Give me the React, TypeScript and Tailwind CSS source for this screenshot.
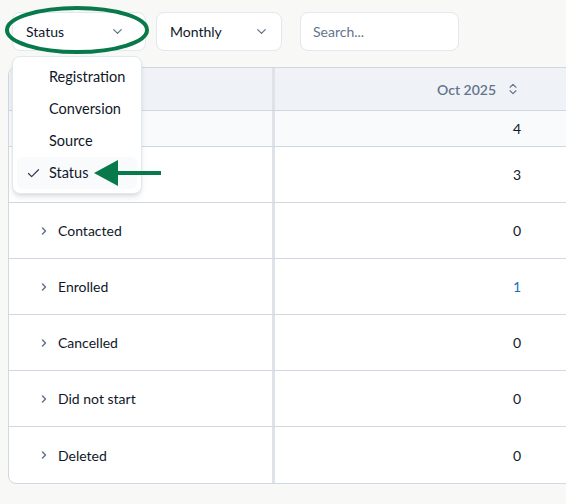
import { ChevronDown, ChevronRight, ChevronsUpDown, Check } from 'lucide-react'

const rows = [
  { label: '', value: '3' },
  { label: 'Contacted', value: '0' },
  { label: 'Enrolled', value: '1', link: true },
  { label: 'Cancelled', value: '0' },
  { label: 'Did not start', value: '0' },
  { label: 'Deleted', value: '0' },
]

const options = ['Registration', 'Conversion', 'Source', 'Status']

export default function App() {
  return (
    <div
      className="relative w-[566px] h-[504px] overflow-hidden bg-[#f8f8f7] text-[14px] text-[#0f172a]"
      style={{ fontFamily: 'Lato, "Noto Sans", sans-serif' }}
    >
      {/* Toolbar */}
      <div className="flex items-center pt-3 pl-3 h-[51px]">
        <button className="w-[134px] h-[39px] flex items-center justify-between pl-[13px] pr-[20px] bg-white border border-[#e2e8f0] rounded-lg">
          <span>Status</span>
          <ChevronDown size={15} className="text-[#64748b]" />
        </button>
        <button className="ml-[10px] w-[126px] h-[39px] flex items-center justify-between pl-[13px] pr-[12px] bg-white border border-[#e2e8f0] rounded-lg">
          <span>Monthly</span>
          <ChevronDown size={15} className="text-[#64748b]" />
        </button>
        <div className="ml-[18px] w-[159px] h-[39px] flex items-center pl-[12px] bg-white border border-[#e2e8f0] rounded-lg text-[#64748b]">
          Search...
        </div>
      </div>

      {/* Table */}
      <div className="ml-2 mt-[16px] w-[620px] bg-white border border-[#cfd8e3] rounded-lg overflow-hidden">
        <div className="grid grid-cols-[266px_262px_1fr] h-[43px] bg-[#eff3f8] border-b border-[#cfd8e3]">
          <div className="border-r-[3px] border-[#dfe3e8]" />
          <div className="flex items-center justify-end pr-[17px] gap-[10px] font-semibold text-[#64748b]">
            <span>Oct 2025</span>
            <ChevronsUpDown size={14} />
          </div>
          <div />
        </div>
        <div className="grid grid-cols-[266px_262px_1fr] h-[36px] bg-[#f8fafc] border-b border-[#cfd8e3]">
          <div className="border-r-[3px] border-[#dfe3e8]" />
          <div className="flex items-center justify-end pr-[16px]">4</div>
          <div />
        </div>
        {rows.map((r, i) => (
          <div
            key={i}
            className={`grid grid-cols-[266px_262px_1fr] h-[56px] ${i < rows.length - 1 ? 'border-b border-[#cfd8e3]' : ''}`}
          >
            <div className="flex items-center pl-[29px] gap-[8px] border-r-[3px] border-[#dfe3e8]">
              <ChevronRight size={12} strokeWidth={3} className="text-[#64748b]" />
              {r.label && <span>{r.label}</span>}
            </div>
            <div className={`flex items-center justify-end pr-[16px] ${r.link ? 'text-[#1d6fb8]' : ''}`}>{r.value}</div>
            <div />
          </div>
        ))}
      </div>

      {/* Dropdown menu */}
      <div className="absolute left-[12px] top-[56px] w-[130px] p-[4px] bg-white border border-[#e2e8f0] rounded-lg shadow-md">
        {options.map((o) => (
          <div
            key={o}
            className={`h-[32px] flex items-center rounded-md ${o === 'Status' ? 'bg-[#f8fafc]' : ''}`}
          >
            <span className="w-[32px] flex justify-center pl-[1px]">
              {o === 'Status' && <Check size={15} className="text-[#334155]" />}
            </span>
            <span className="text-[14.5px]">{o}</span>
          </div>
        ))}
      </div>

      {/* Annotations */}
      <svg className="absolute left-0 top-0 pointer-events-none" width="566" height="504">
        <ellipse cx="77" cy="30" rx="70" ry="22" fill="none" stroke="#08794a" strokeWidth="4" />
        <line x1="112" y1="173" x2="161" y2="173" stroke="#08794a" strokeWidth="4" />
        <polygon points="94,173 118,160 118,186" fill="#08794a" />
      </svg>
    </div>
  )
}
